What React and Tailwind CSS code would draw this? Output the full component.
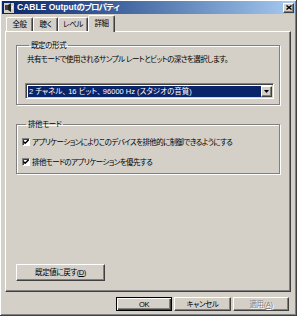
import React from 'react';

const jp = "font-['Liberation_Sans','Noto_Sans_CJK_JP',sans-serif] [font-feature-settings:'palt'] text-[7.5px] tracking-[-0.4px] leading-[11px] text-black";
const raised = "bg-[#d4d0c8] border border-t-white border-l-white border-r-[#404040] border-b-[#404040] shadow-[inset_-1px_-1px_#808080]";

function Check() {
  return (
    <span className="w-[8px] h-[8px] bg-white border border-t-[#808080] border-l-[#808080] border-r-white border-b-white shadow-[inset_1px_1px_#404040] flex items-center justify-center shrink-0">
      <svg width="6" height="6" viewBox="0 0 7 7">
        <path d="M0.5 3 L2.5 5 L6.5 1" fill="none" stroke="#000" strokeWidth="1.6" />
      </svg>
    </span>
  );
}

function Group({ label, children, className = '' }) {
  return (
    <fieldset className={`border border-[#808080] shadow-[inset_1px_1px_#fff,1px_1px_#fff] ${className}`}>
      <legend className={`${jp} ml-[4px] px-[2px]`}>{label}</legend>
      {children}
    </fieldset>
  );
}

export default function App() {
  return (
    <div className="w-[297px] h-[316px] bg-[#d4d0c8] flex flex-col pt-[1px] px-[2px] shadow-[inset_-1px_-1px_#404040,inset_1px_1px_#fff,inset_-2px_-2px_#808080]">
      {/* Title bar */}
      <div className="h-[13px] flex items-center bg-gradient-to-r from-[#0a246a] to-[#a6caf0] pl-[2px]">
        <svg width="10" height="10" viewBox="0 0 10 10" className="shrink-0">
          <rect x="0" y="0" width="10" height="10" fill="#d4d0c8" />
          <rect x="1" y="2" width="3" height="5" fill="#404040" />
          <path d="M4 2 L7 0 L7 9 L4 7 Z" fill="#202020" />
          <path d="M8 3 Q9 4.5 8 6" stroke="#fff" fill="none" />
        </svg>
        <span className="ml-[3px] font-['Liberation_Sans','Noto_Sans_CJK_JP',sans-serif] font-bold text-[8.5px] leading-[11px] text-white whitespace-nowrap">
          CABLE Output<span className="tracking-[-1.2px]">のプロパティ</span>
        </span>
        <div className={`ml-auto mr-[1px] w-[11px] h-[10px] flex items-center justify-center ${raised}`}>
          <svg width="6" height="5" viewBox="0 0 6 5">
            <path d="M0.5 0.5 L5.5 4.5 M5.5 0.5 L0.5 4.5" stroke="#000" strokeWidth="1.4" />
          </svg>
        </div>
      </div>

      <div className="pl-[3px] flex flex-col flex-1">
        {/* Tabs */}
        <div className="mt-[1px] h-[16px] flex items-end pl-[1px]">
          {['全般', '聴く', 'レベル'].map((t, i) => (
            <div
              key={t}
              className={`${jp} h-[14px] flex items-center justify-center border-t border-l border-t-white border-l-white border-r border-r-[#404040] shadow-[inset_-1px_0_#808080] rounded-t-[2px] ${i === 0 ? 'w-[27px]' : i === 1 ? 'w-[25px]' : 'w-[30px]'}`}
            >
              {t}
            </div>
          ))}
          <div className={`${jp} relative z-10 -mb-[1px] w-[27px] h-[17px] pb-[2px] bg-[#d4d0c8] flex items-center justify-center border-t border-l border-t-white border-l-white border-r border-r-[#404040] shadow-[inset_-1px_0_#808080] rounded-t-[2px]`}>
            詳細
          </div>
        </div>

        {/* Panel */}
        <div className="w-[286px] h-[261px] flex flex-col px-[10px] border border-t-white border-l-white border-r-[#404040] border-b-[#404040] shadow-[inset_-1px_-1px_#808080]">
          <Group label="既定の形式" className="mt-[8px] pl-[8px] pr-[5px] pb-[5px]">
            <div className={`${jp} !tracking-[-0.55px] mt-[3px] pl-[2px] whitespace-nowrap`}>
              共有モードで使用されるサンプル レートとビットの深さを選択します。
            </div>
            <div className="mt-[18px] h-[16px] flex bg-white border border-t-[#808080] border-l-[#808080] border-r-white border-b-white shadow-[inset_1px_1px_#404040,inset_-1px_-1px_#d4d0c8] p-[2px] pr-[1px] pb-[1px]">
              <div className={`${jp} !tracking-[0px] flex-1 bg-[#0a246a] !text-white pl-[1px] flex items-center whitespace-nowrap`}>
                2 チャネル、 16 ビット、 96000 Hz (スタジオの音質)
              </div>
              <div className={`w-[11px] flex items-center justify-center ${raised}`}>
                <svg width="5" height="3" viewBox="0 0 5 3">
                  <path d="M0 0 H5 L2.5 3 Z" fill="#000" />
                </svg>
              </div>
            </div>
          </Group>

          <Group label="排他モード" className="mt-[14px] pl-[5px] pb-[5px]">
            <label className={`${jp} !tracking-[-0.6px] mt-[6px] h-[12px] flex items-center gap-[2px] whitespace-nowrap`}>
              <Check />
              アプリケーションによりこのデバイスを排他的に制御できるようにする
            </label>
            <label className={`${jp} !tracking-[-0.6px] mt-[8px] h-[12px] flex items-center gap-[2px] whitespace-nowrap`}>
              <Check />
              排他モードのアプリケーションを優先する
            </label>
          </Group>

          <div className="flex-1" />
          <button className={`${jp} ${raised} w-[89px] h-[17px] mb-[10px] flex items-center justify-center`}>
            既定値に戻す(<span className="underline">D</span>)
          </button>
        </div>

        {/* Dialog buttons */}
        <div className="mt-[5px] w-[286px] pr-[2px] flex justify-end gap-[2px]">
          <button className={`${jp} w-[56px] h-[14px] flex items-center justify-center bg-[#d4d0c8] border border-black shadow-[inset_1px_1px_#fff,inset_-1px_-1px_#404040,inset_-2px_-2px_#808080]`}>
            OK
          </button>
          <button className={`${jp} ${raised} w-[57px] h-[14px] flex items-center justify-center`}>
            キャンセル
          </button>
          <button className={`${jp} ${raised} w-[56px] h-[14px] flex items-center justify-center !text-[#808080] [text-shadow:1px_1px_#fff]`}>
            適用(<span className="underline">A</span>)
          </button>
        </div>
      </div>
    </div>
  );
}
